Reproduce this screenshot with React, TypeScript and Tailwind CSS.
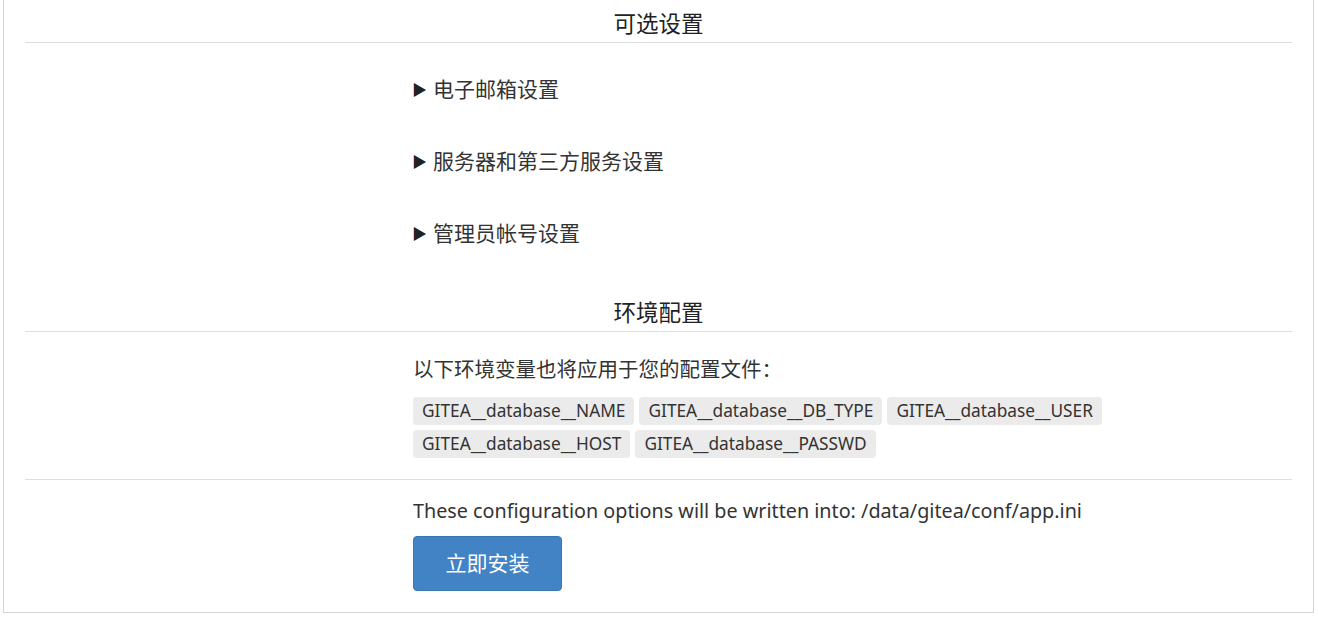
import React from 'react';

const font = 'font-["Noto_Sans","Noto_Sans_CJK_SC",sans-serif]';

const envVars = [
  'GITEA__database__NAME',
  'GITEA__database__DB_TYPE',
  'GITEA__database__USER',
  'GITEA__database__HOST',
  'GITEA__database__PASSWD',
];

const optional = ['电子邮箱设置', '服务器和第三方服务设置', '管理员帐号设置'];

const Heading: React.FC<{ title: string; className?: string }> = ({ title, className }) => (
  <div className={`border-b border-[#dededf] pt-[10px] pb-[4px] text-center text-[22.5px] leading-[28px] text-[#222] ${className ?? ''}`}>
    {title}
  </div>
);

const App: React.FC = () => {
  return (
    <div className={`h-[619px] overflow-hidden bg-white ${font}`}>
      <div className="ml-[3px] mr-[4px] border border-t-0 border-[#d4d4d5] px-[21px] pb-[21px]">
        {/* 可选设置 */}
        <Heading title="可选设置" />
        <div className="flex pt-[10px]">
          <div className="w-[388px] shrink-0" />
          <div className="flex-1">
            {optional.map((item) => (
              <details key={item} className="flex h-[72px] items-center">
                <summary className="flex h-[72px] cursor-pointer items-center text-[21px] leading-[28px] text-[#333] [list-style:none]">
                  <span className="mr-[6px] -ml-[1px] text-[15px] leading-none text-[#222]">▶</span>
                  {item}
                </summary>
              </details>
            ))}
          </div>
        </div>

        {/* 环境配置 */}
        <Heading title="环境配置" className="mt-[20px]" />
        <div className="flex border-b border-[#dededf] pt-[23px] pb-[21px]">
          <div className="w-[388px] shrink-0" />
          <div className="flex-1">
            <p className="text-[20.5px] leading-[28px] text-[#333]">以下环境变量也将应用于您的配置文件：</p>
            <div className="mt-[14px] flex flex-wrap gap-[5px]">
              {envVars.map((v) => (
                <code
                  key={v}
                  className={`rounded-[4px] bg-[#ebebeb] px-[9px] text-[17.3px] leading-[28px] text-[#333] ${font}`}
                >
                  {v}
                </code>
              ))}
            </div>
          </div>
        </div>

        {/* 安装 */}
        <div className="flex pt-[17px]">
          <div className="w-[388px] shrink-0" />
          <div className="flex-1">
            <p className="text-[19.76px] leading-[28px] text-[#333]">
              These configuration options will be written into: /data/gitea/conf/app.ini
            </p>
            <button className="mt-[11px] h-[55px] w-[149px] rounded-[4px] border border-[#3a76b0] bg-[#4183c4] text-[21px] text-white">
              立即安装
            </button>
          </div>
        </div>
      </div>
    </div>
  );
};

export default App;
